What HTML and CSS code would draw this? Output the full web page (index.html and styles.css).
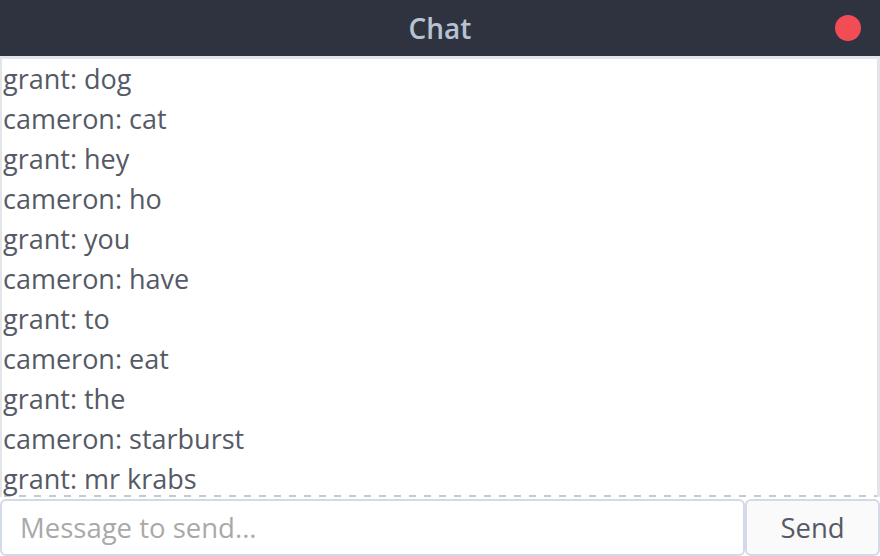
FILE: index.html
```html
<!DOCTYPE html>
<html>
<head>
<meta charset="utf-8">
<title>Chat</title>
<link rel="stylesheet" href="styles.css">
</head>
<body>
<div class="window">
  <header class="titlebar">
    <span class="spacer"></span>
    <h1 class="title">Chat</h1>
    <span class="close-wrap"><span class="close"></span></span>
  </header>
  <div class="log">
    <div class="msg">grant: dog</div>
    <div class="msg">cameron: cat</div>
    <div class="msg">grant: hey</div>
    <div class="msg">cameron: ho</div>
    <div class="msg">grant: you</div>
    <div class="msg">cameron: have</div>
    <div class="msg">grant: to</div>
    <div class="msg">cameron: eat</div>
    <div class="msg">grant: the</div>
    <div class="msg">cameron: starburst</div>
    <div class="msg">grant: mr krabs</div>
  </div>
  <form class="composer">
    <input class="input" type="text" placeholder="Message to send...">
    <button class="send" type="button">Send</button>
  </form>
</div>
</body>
</html>
```
FILE: styles.css
```css
* { box-sizing: border-box; }
html, body { margin: 0; padding: 0; background: #ffffff; }
body { font-family: "Open Sans", "Noto Sans", sans-serif; }
.window {
  width: 880px;
  height: 556px;
  display: flex;
  flex-direction: column;
  overflow: hidden;
}
.titlebar {
  height: 56px;
  flex: none;
  background: #2f333f;
  display: grid;
  grid-template-columns: 1fr auto 1fr;
  align-items: center;
}
.title {
  margin: 0;
  font-size: 28px;
  font-weight: 600;
  color: #b7c3d3;
  letter-spacing: 0;
}
.close-wrap { display: flex; justify-content: flex-end; padding-right: 19px; }
.close {
  width: 26px;
  height: 26px;
  border-radius: 50%;
  background: #f24d57;
  display: block;
}
.log {
  flex: none;
  height: 441px;
  border-style: solid;
  border-color: #e2e5ea;
  border-width: 3px 3px 0 2px;
  padding: 1px 0 2px 1px;
  background-color: #fff;
  background-image: repeating-linear-gradient(to right, #c9c9c9 0 7px, transparent 7px 15px);
  background-size: 100% 2px;
  background-position: left 2px bottom;
  background-repeat: no-repeat;
}
.msg {
  height: 40px;
  line-height: 40px;
  font-size: 27px;
  color: #555a66;
  white-space: nowrap;
}
.msg:first-child { margin-top: -1px; }
.composer {
  margin: 2px 0 0 0;
  flex: 1;
  display: flex;
}
.input {
  flex: 1;
  min-width: 0;
  margin: 0;
  border: 2px solid #d2daea;
  border-radius: 6px;
  padding: 0 0 0 18px;
  font-family: inherit;
  font-size: 27.5px;
  color: #555a66;
  background: #fff;
  outline: none;
}
.input::placeholder { color: #a9a9a9; }
.send {
  width: 135px;
  flex: none;
  margin: 0;
  border: 2px solid #d2daea;
  border-radius: 6px;
  background: #fafafa;
  font-family: inherit;
  font-size: 27.5px;
  color: #555a66;
  padding: 0;
}
```
